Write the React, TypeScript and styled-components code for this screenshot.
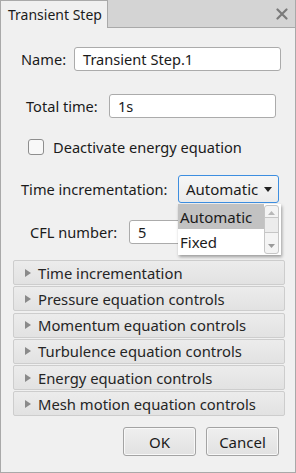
import React from "react";
import styled, { createGlobalStyle } from "styled-components";

const GlobalStyle = createGlobalStyle`
  html, body {
    margin: 0;
    padding: 0;
    background: #f0f0f0;
  }
  body {
    font-family: "Noto Sans", "Open Sans", sans-serif;
    font-size: 14.6px;
    color: #1b1b1b;
  }
`;

const Window = styled.div`
  width: 296px;
  height: 473px;
  display: flex;
  flex-direction: column;
  box-sizing: border-box;
`;

const TabBar = styled.div`
  display: flex;
  height: 28px;
  flex-shrink: 0;
`;

const Tab = styled.div`
  width: 108px;
  box-sizing: border-box;
  border: 1px solid #a9a9a9;
  border-bottom: none;
  background: #f0f0f0;
  padding-left: 7px;
  display: flex;
  align-items: center;
  font-size: 14px;
  line-height: 1;
`;

const TabFill = styled.div`
  flex: 1;
  background: #d4d4d4;
  border-bottom: 1px solid #a9a9a9;
  border-right: 1px solid #a9a9a9;
  display: flex;
  align-items: center;
  justify-content: flex-end;
  padding-right: 7px;
`;

const Panel = styled.div`
  flex: 1;
  border: 1px solid #a9a9a9;
  border-top: none;
  background: #f0f0f0;
  padding-top: 19px;
  display: flex;
  flex-direction: column;
`;

const Row = styled.div<{ $indent: number; $top?: number; $h?: number }>`
  display: flex;
  align-items: center;
  padding-left: ${({ $indent }) => $indent}px;
  margin-top: ${({ $top }) => $top ?? 0}px;
  height: ${({ $h }) => $h ?? 24}px;
  position: relative;
`;

const Label = styled.span<{ $w: number }>`
  flex: 0 0 ${({ $w }) => $w}px;
  white-space: nowrap;
`;

const Input = styled.div<{ $w: number }>`
  width: ${({ $w }) => $w}px;
  height: 24px;
  box-sizing: border-box;
  background: #fff;
  border: 1px solid #ababab;
  border-radius: 3px;
  padding-left: 8px;
  display: flex;
  align-items: center;
`;

const Check = styled.div`
  width: 16px;
  height: 16px;
  box-sizing: border-box;
  border: 1px solid #8e8e8e;
  border-radius: 3px;
  background: #f8f8f8;
  margin-right: 9px;
`;

const ComboWrap = styled.div`
  position: relative;
`;

const Combo = styled.div`
  width: 101px;
  height: 28px;
  box-sizing: border-box;
  border: 1px solid #3d8ee0;
  border-radius: 3px;
  background: linear-gradient(#f6f6f6, #ebebeb);
  padding-left: 7px;
  padding-right: 6px;
  display: flex;
  align-items: center;
  justify-content: space-between;
  font-size: 15px;
`;

const Arrow = styled.span`
  width: 0;
  height: 0;
  border-left: 4px solid transparent;
  border-right: 4px solid transparent;
  border-top: 5px solid #222;
`;

const Dropdown = styled.div`
  position: absolute;
  top: 29px;
  left: 0;
  width: 103px;
  height: 51px;
  background: #fff;
  box-shadow: 1px 2px 3px rgba(0, 0, 0, 0.35);
  display: flex;
  z-index: 5;
`;

const Options = styled.div`
  flex: 1;
  display: flex;
  flex-direction: column;
`;

const Option = styled.div<{ $active?: boolean }>`
  height: 25px;
  display: flex;
  align-items: center;
  padding-left: 2px;
  font-size: 15px;
  background: ${({ $active }) => ($active ? "#c2c2c2" : "transparent")};
`;

const ScrollBar = styled.div`
  width: 15px;
  margin: 1px 2px 1px 0;
  box-sizing: border-box;
  border: 1px solid #c6c6c6;
  border-radius: 3px;
  background: #f4f4f4;
  display: flex;
  flex-direction: column;
  justify-content: space-between;
  align-items: stretch;
`;

const ScrollBtn = styled.div`
  height: 14px;
  display: flex;
  align-items: center;
  justify-content: center;
`;

const Thumb = styled.div`
  height: 14px;
  border-top: 1px solid #c6c6c6;
  border-bottom: 1px solid #c6c6c6;
  background: #ececec;
  margin-top: -10px;
`;

const Sections = styled.div`
  margin: 16px 10px 0 12px;
  display: flex;
  flex-direction: column;
  gap: 1.3px;
`;

const Section = styled.div`
  height: 25px;
  box-sizing: border-box;
  border: 1px solid #cdcdcd;
  border-radius: 2px;
  background: linear-gradient(#ececec, #e2e2e2);
  display: flex;
  align-items: center;
  padding-left: 11px;
  font-size: 14.8px;
  color: #252525;
`;

const Tri = styled.span`
  width: 0;
  height: 0;
  border-top: 4.5px solid transparent;
  border-bottom: 4.5px solid transparent;
  border-left: 6px solid #8a8a8a;
  margin-right: 7px;
`;

const Buttons = styled.div`
  display: flex;
  justify-content: flex-end;
  gap: 10px;
  margin-top: 11px;
  padding-right: 16px;
`;

const Button = styled.div`
  width: 73px;
  height: 29px;
  box-sizing: border-box;
  border: 1px solid #a3a3a3;
  border-radius: 3px;
  background: linear-gradient(#efefef, #e1e1e1);
  box-shadow: inset 0 0 0 1px #f8f8f8;
  display: flex;
  align-items: center;
  justify-content: center;
  font-size: 15px;
`;

const sections = [
  "Time incrementation",
  "Pressure equation controls",
  "Momentum equation controls",
  "Turbulence equation controls",
  "Energy equation controls",
  "Mesh motion equation controls",
];

export default function App() {
  return (
    <>
      <GlobalStyle />
      <Window>
        <TabBar>
          <Tab>Transient Step</Tab>
          <TabFill>
            <svg width="12" height="12" viewBox="0 0 12 12">
              <path d="M1.5 1.5 L10.5 10.5 M10.5 1.5 L1.5 10.5" stroke="#7a7a7a" strokeWidth="2.2" strokeLinecap="round" />
            </svg>
          </TabFill>
        </TabBar>
        <Panel>
          <Row $indent={20}>
            <Label $w={53}>Name:</Label>
            <Input $w={207}>Transient Step.1</Input>
          </Row>
          <Row $indent={25} $top={23}>
            <Label $w={83}>Total time:</Label>
            <Input $w={167}>1s</Input>
          </Row>
          <Row $indent={27} $top={20} $h={18}>
            <Check />
            <span>Deactivate energy equation</span>
          </Row>
          <Row $indent={20} $top={19} $h={28}>
            <Label $w={157}>Time incrementation:</Label>
            <ComboWrap>
              <Combo>
                Automatic
                <Arrow />
              </Combo>
              <Dropdown>
                <Options>
                  <Option $active>Automatic</Option>
                  <Option>Fixed</Option>
                </Options>
                <ScrollBar>
                  <ScrollBtn>
                    <svg width="7" height="4" viewBox="0 0 7 4">
                      <path d="M0 4 L3.5 0 L7 4 Z" fill="#b8b8b8" />
                    </svg>
                  </ScrollBtn>
                  <Thumb />
                  <ScrollBtn>
                    <svg width="7" height="4" viewBox="0 0 7 4">
                      <path d="M0 0 L3.5 4 L7 0 Z" fill="#9a9a9a" />
                    </svg>
                  </ScrollBtn>
                </ScrollBar>
              </Dropdown>
            </ComboWrap>
          </Row>
          <Row $indent={29} $top={16} $h={25}>
            <Label $w={99}>CFL number:</Label>
            <Input $w={150}>5</Input>
          </Row>
          <Sections>
            {sections.map((s) => (
              <Section key={s}>
                <Tri />
                {s}
              </Section>
            ))}
          </Sections>
          <Buttons>
            <Button>OK</Button>
            <Button>Cancel</Button>
          </Buttons>
        </Panel>
      </Window>
    </>
  );
}
